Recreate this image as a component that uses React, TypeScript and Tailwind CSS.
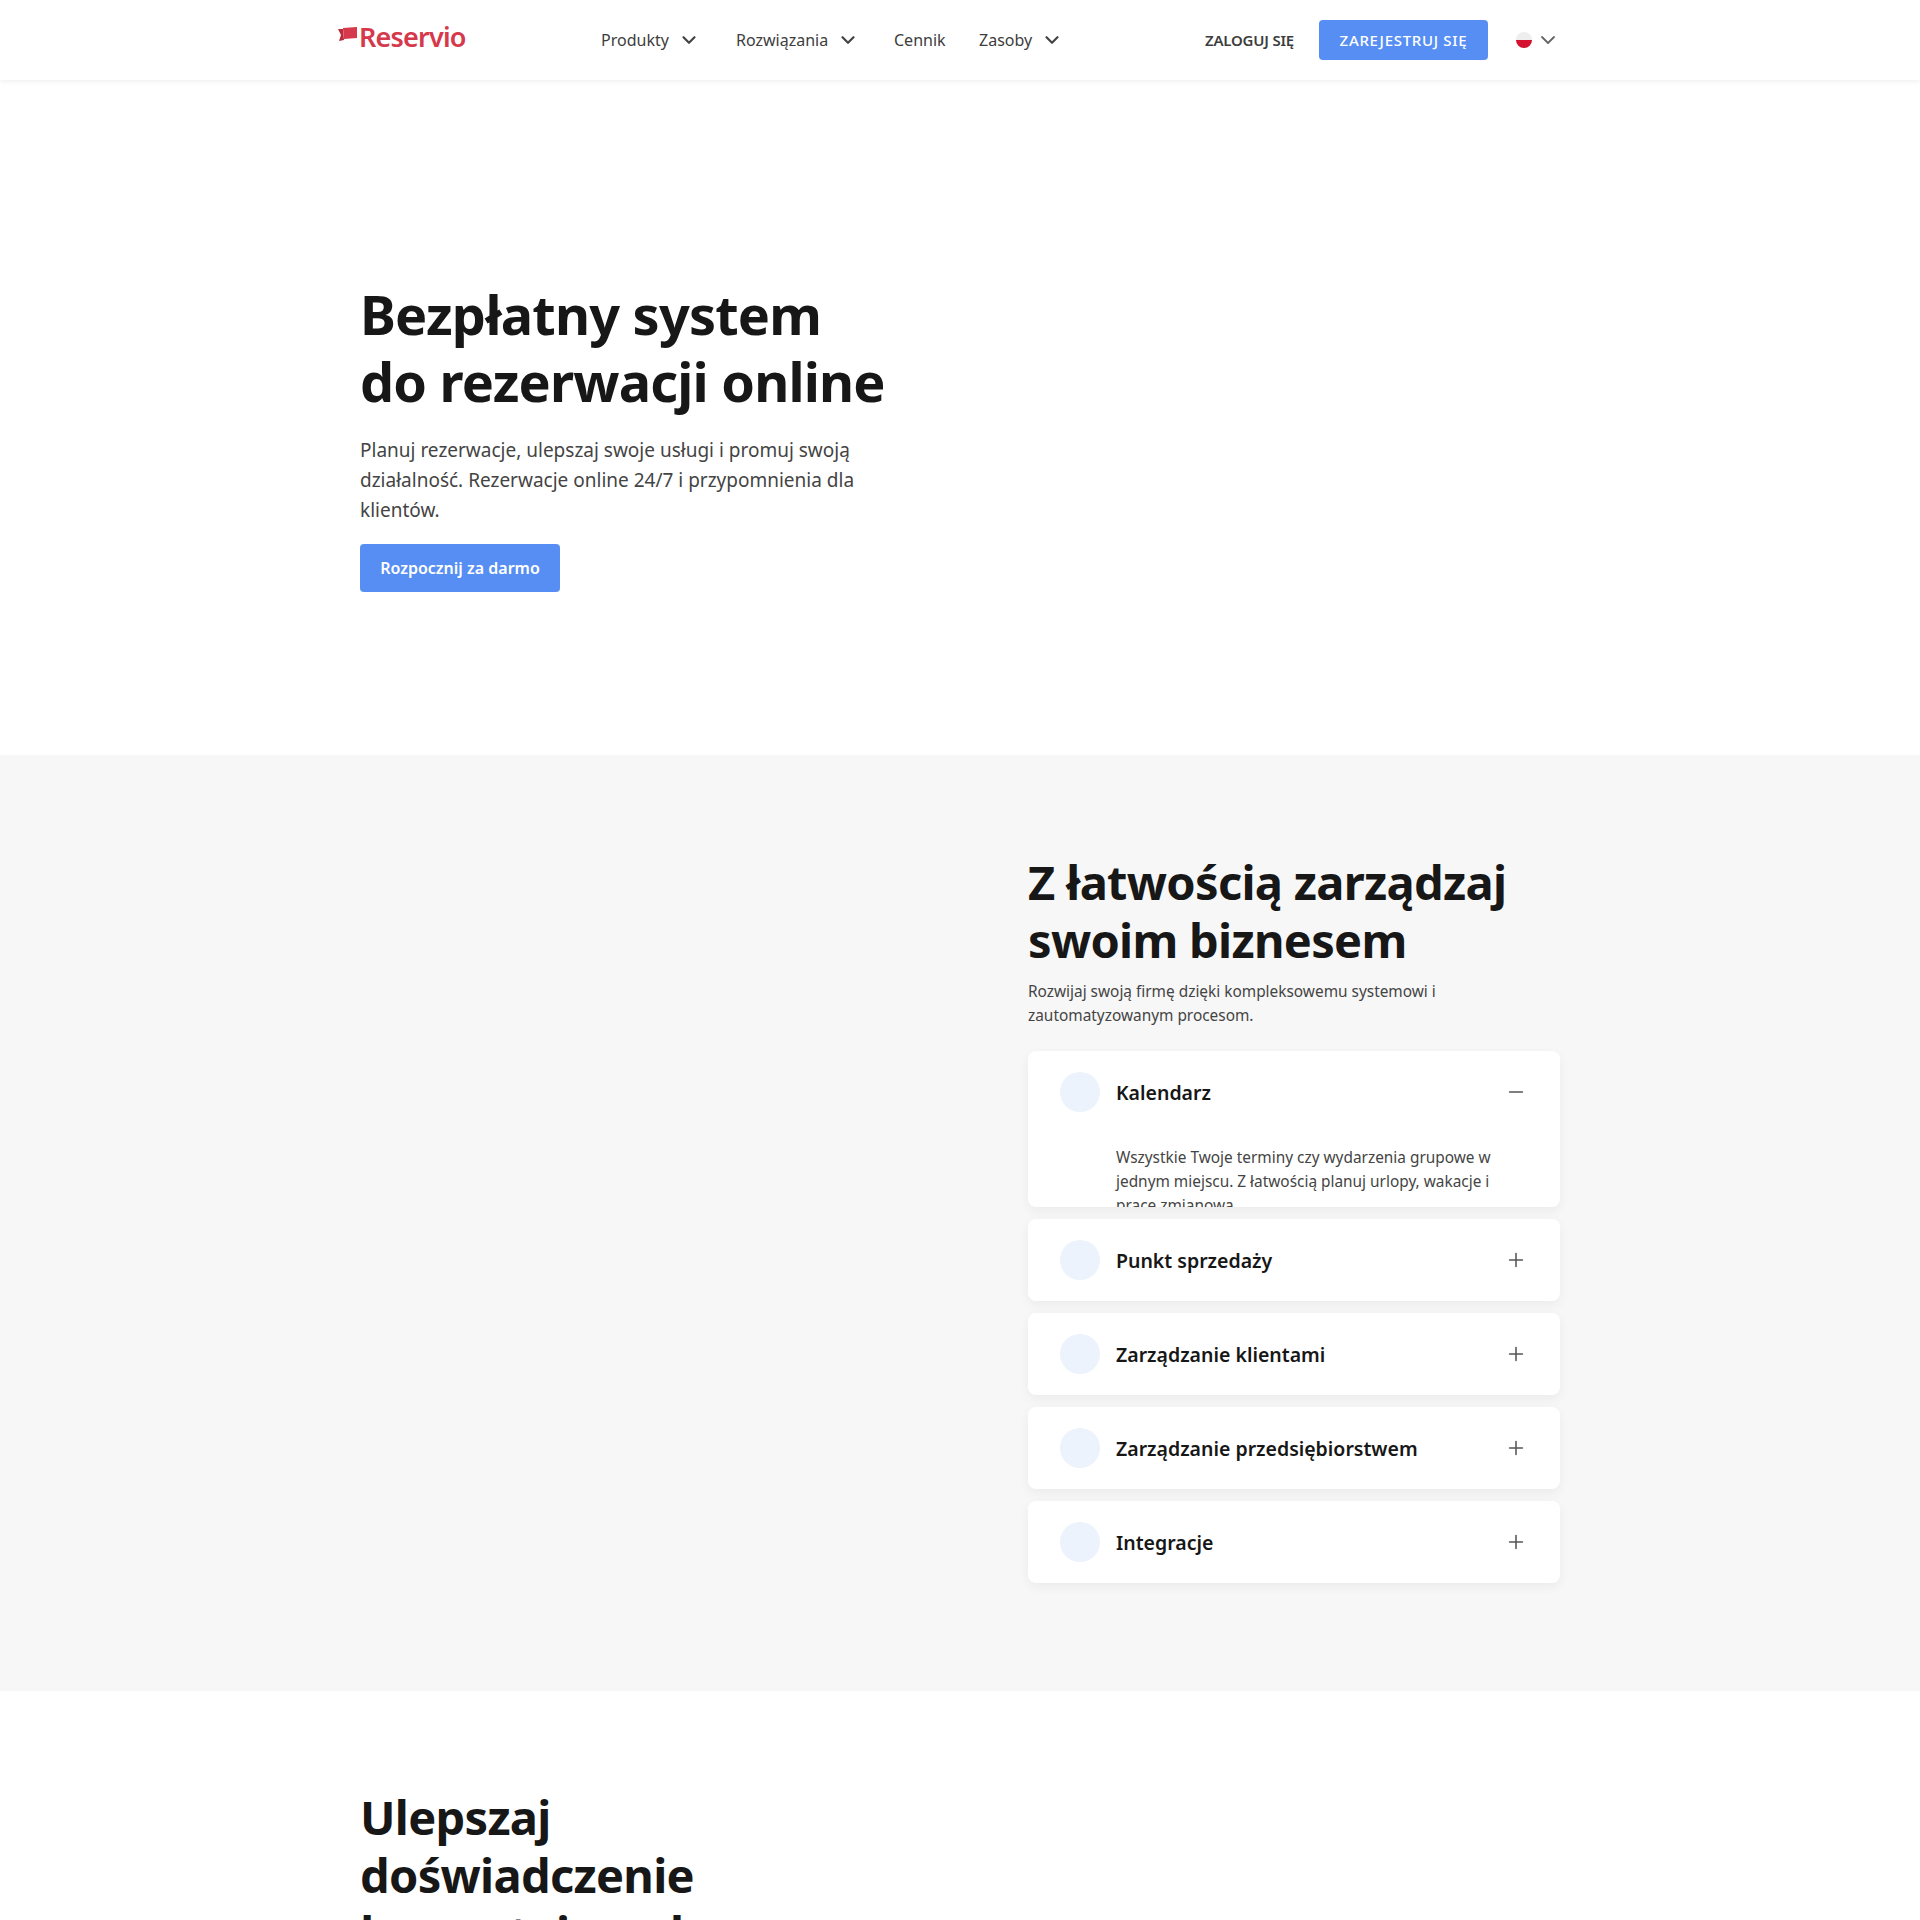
import { ChevronDown, Minus, Plus } from 'lucide-react'

const font = { fontFamily: '"Noto Sans", sans-serif' }

const navItems = [
  { label: 'Produkty', arrow: true, width: 'w-[135px]' },
  { label: 'Rozwiązania', arrow: true, width: 'w-[158px]' },
  { label: 'Cennik', arrow: false, width: 'w-[85px]' },
  { label: 'Zasoby', arrow: true, width: 'w-[90px]' },
]

const rows = ['Punkt sprzedaży', 'Zarządzanie klientami', 'Zarządzanie przedsiębiorstwem', 'Integracje']

function RowHead({ label, open }: { label: string; open?: boolean }) {
  return (
    <div className="flex h-[82px] items-center pl-8 pr-[33px]">
      <span className="h-10 w-10 shrink-0 rounded-full bg-[#ecf3fd]" />
      <span className="ml-4 flex-1 pt-[2px] text-[19.5px] font-semibold text-[#171717]">{label}</span>
      {open ? <Minus size={22} strokeWidth={1.7} className="text-[#555]" /> : <Plus size={22} strokeWidth={1.7} className="text-[#555]" />}
    </div>
  )
}

export default function App() {
  return (
    <div style={font} className="h-[1920px] overflow-hidden bg-white">
      <header className="relative z-10 flex h-20 items-center justify-center bg-white shadow-[0_1px_6px_rgba(0,0,0,0.08)]">
        <div className="flex w-[1244px] items-center pr-[22px]">
          <a className="mt-[-8px] flex w-[263px] items-center gap-[2px]">
            <svg width="19" height="14" viewBox="0 0 19 14" className="mt-[-5px]">
              <path d="M0 2H5L6 13 1 14 3 8Z" fill="#b92c3e" />
              <path d="M5 1 19 0V11L6 12Z" fill="#d5394b" />
            </svg>
            <span className="text-[27px] leading-none font-semibold tracking-[-0.8px] text-[#d5394b]">Reservio</span>
          </a>
          <nav className="flex flex-1 items-center">
            {navItems.map((item) => (
              <a key={item.label} className={`flex items-center text-[16px] text-[#3d3d3d] ${item.width}`}>
                {item.label}
                {item.arrow && <ChevronDown size={22} strokeWidth={2.4} className="ml-[9px] text-[#444]" />}
              </a>
            ))}
          </nav>
          <a className="mr-[25px] text-[15px] font-semibold tracking-[-0.2px] text-[#3d3d3d]">ZALOGUJ SIĘ</a>
          <a className="flex h-10 w-[169px] items-center justify-center rounded bg-[#568ef3] text-[15px] font-medium tracking-[0.7px] text-white">
            ZAREJESTRUJ SIĘ
          </a>
          <div className="ml-7 flex items-center">
            <span className="flex h-4 w-4 flex-col overflow-hidden rounded-full">
              <span className="h-2 bg-[#eeeeee]" />
              <span className="h-2 bg-[#d4112f]" />
            </span>
            <ChevronDown size={24} strokeWidth={1.8} className="ml-1 text-[#666]" />
          </div>
        </div>
      </header>

      <section className="flex h-[675px] justify-center bg-white">
        <div className="w-[1200px] pt-[201px]">
          <h1 className="text-[54px] leading-[67px] font-bold tracking-[-0.8px] text-[#171717]">
            Bezpłatny system
            <br />
            do rezerwacji online
          </h1>
          <p className="mt-5 w-[530px] text-[19px] leading-[30px] text-[#444]">
            Planuj rezerwacje, ulepszaj swoje usługi i promuj swoją działalność. Rezerwacje online 24/7 i przypomnienia dla klientów.
          </p>
          <a className="mt-[19px] flex h-12 w-[200px] items-center justify-center rounded bg-[#568ef3] text-[16px] font-semibold text-white">
            Rozpocznij za darmo
          </a>
        </div>
      </section>

      <section className="flex h-[936px] justify-center bg-[#f7f7f7]">
        <div className="w-[1200px] pl-[668px] pt-[98px]">
          <h2 className="text-[47px] leading-[58px] font-bold tracking-[-0.7px] text-[#171717]">
            Z łatwością zarządzaj swoim biznesem
          </h2>
          <p className="mt-[11px] text-[15.4px] leading-6 text-[#444]">
            Rozwijaj swoją firmę dzięki kompleksowemu systemowi i zautomatyzowanym procesom.
          </p>
          <div className="mt-[23px] flex flex-col gap-3">
            <div className="h-[156px] overflow-hidden rounded-lg bg-white shadow-[0_4px_12px_rgba(0,0,0,0.05)]">
              <RowHead label="Kalendarz" open />
              <p className="mt-[13px] pl-[88px] pr-[60px] text-[15.4px] leading-6 text-[#444]">
                Wszystkie Twoje terminy czy wydarzenia grupowe w jednym miejscu. Z łatwością planuj urlopy, wakacje i pracę zmianową.
              </p>
            </div>
            {rows.map((label) => (
              <div key={label} className="rounded-lg bg-white shadow-[0_4px_12px_rgba(0,0,0,0.05)]">
                <RowHead label={label} />
              </div>
            ))}
          </div>
        </div>
      </section>

      <section className="flex justify-center bg-white">
        <div className="w-[1200px] pt-[97px]">
          <h2 className="w-[400px] text-[47px] leading-[58px] font-bold tracking-[-0.7px] text-[#171717]">
            Ulepszaj doświadczenie korzystających
          </h2>
        </div>
      </section>
    </div>
  )
}
